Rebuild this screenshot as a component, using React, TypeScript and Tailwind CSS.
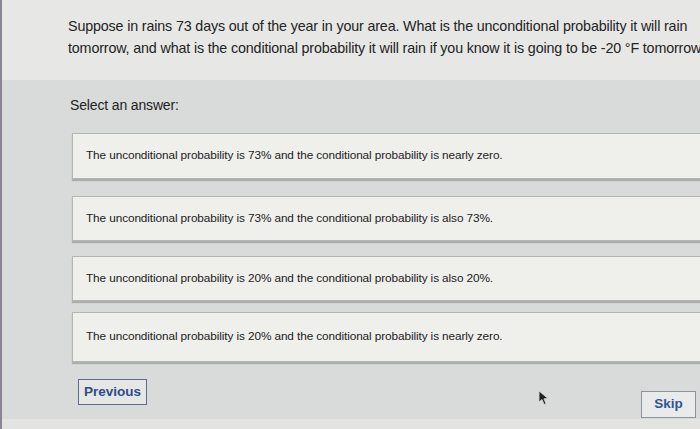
import React from "react"

const options = [
  { text: "The unconditional probability is 73% and the conditional probability is nearly zero.", box: "mt-[18px] h-[46px]" },
  { text: "The unconditional probability is 73% and the conditional probability is also 73%.", box: "mt-[17px] h-[45px]" },
  { text: "The unconditional probability is 20% and the conditional probability is also 20%.", box: "mt-[15px] h-[45px]" },
  { text: "The unconditional probability is 20% and the conditional probability is nearly zero.", box: "mt-[11px] h-[50px]" },
]

function Cursor() {
  return (
    <svg width="12" height="16" viewBox="0 0 12 16" className="absolute left-[536px] top-[390px]">
      <path d="M1 1 L1 12 L4 9.5 L6.2 14.5 L8 13.7 L5.9 8.8 L10 8.6 Z" fill="#1f1f1f" stroke="#d9d9d9" strokeWidth="0.8" />
    </svg>
  )
}

export default function App() {
  return (
    <div
      className="relative h-[429px] w-[700px] overflow-hidden border-l-2 border-[#8a8496] bg-[#d9dbda] text-[#222]"
      style={{ fontFamily: '"Liberation Sans", Arial, sans-serif' }}
    >
      <div className="h-[80px] bg-[#e7e8e6] pl-[66px] pt-[15px]">
        <p className="whitespace-nowrap text-[14.3px] leading-[22px] tracking-[-0.15px] text-[#232323]">
          Suppose in rains 73 days out of the year in your area. What is the unconditional probability it will rain
          <br />
          tomorrow, and what is the conditional probability it will rain if you know it is going to be -20 °F tomorrow?
        </p>
      </div>

      <div className="pl-[68px] pt-[15px]">
        <p className="text-[14px] leading-[20px] tracking-[-0.15px] text-[#232323]">Select an answer:</p>
      </div>

      <div className="flex flex-col pl-[70px]">
        {options.map((o, i) => (
          <div
            key={i}
            className={
              "-mr-[10px] flex items-center border border-[#b4b6b4] bg-[#efefec] pl-[13px] shadow-[0_2px_1px_rgba(90,90,90,0.35)] " +
              o.box
            }
          >
            <span className="whitespace-nowrap text-[11.8px] tracking-[-0.1px] text-[#1c1c1c]">{o.text}</span>
          </div>
        ))}
      </div>

      <div className="flex items-start justify-between pl-[76px] pr-[4px] pt-[17px]">
        <button className="h-[26px] w-[69px] border border-[#5d6b88] bg-[#e6e7e4] text-[13.5px] font-bold text-[#2c4d8c]">
          Previous
        </button>
        <button className="mt-[12px] h-[27px] w-[55px] border border-[#8c939c] bg-[#e9eaea] text-[13.5px] font-bold text-[#2d5597]">
          Skip
        </button>
      </div>

      <div className="absolute bottom-0 left-0 h-[10px] w-full bg-[#e3e4e2]" />
      <Cursor />
    </div>
  )
}
